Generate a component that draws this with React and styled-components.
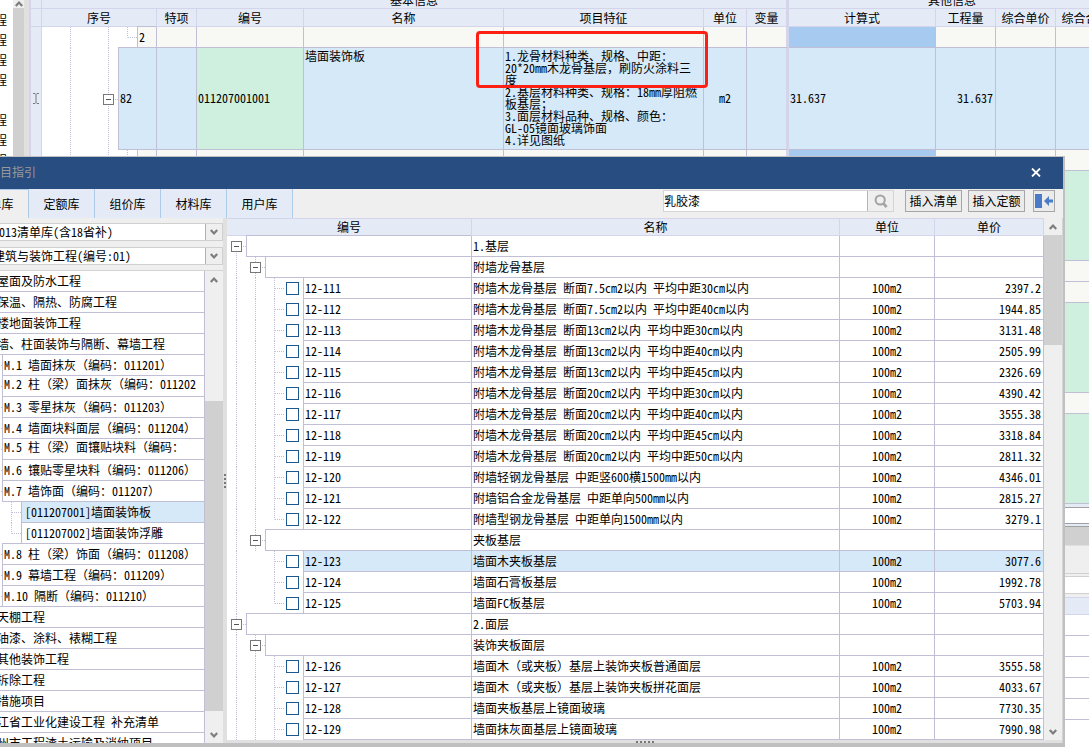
import React from 'react';
import styled, { createGlobalStyle, css } from 'styled-components';

const GlobalStyle = createGlobalStyle`
	* {
		box-sizing: border-box;
	}

	body {
		margin: 0;
		color: #000;
		font-family: "Noto Sans Mono CJK SC", "Noto Sans CJK SC", monospace;
		font-size: 12px;
		line-height: 14px;
	}

	button, input, select {
		margin: 0;
		padding: 0;
		color: inherit;
		font: inherit;
		border-radius: 0;
	}
`

const LINE = '#c0bfd6';
const HEAD_LINE = '#d4d5ea';
const HEAD = '#e4ebf7';
const SELECTED = '#d6e9f8';
const GREEN = '#cff0df';
const CREAM = '#f8f9f5';

const Screen = styled.main`
	position: relative;
	display: flex;
	height: 100vh;
	overflow: hidden;
	background: #fff;
`

/* tree guides */

const dotsDown = `repeating-linear-gradient(to bottom, ${LINE} 0 1px, transparent 1px 2px)`;
const dotsRight = `repeating-linear-gradient(to right, ${LINE} 0 1px, transparent 1px 2px)`;

const guides = {
	' ': 'none',
	'|': `${dotsDown} 9px 0 / 1px 100% no-repeat`,
	'T': `${dotsDown} 9px 0 / 1px 100% no-repeat, ${dotsRight} 10px 50% / 9px 1px no-repeat`,
	'L': `${dotsDown} 9px 0 / 1px 50% no-repeat, ${dotsRight} 10px 50% / 9px 1px no-repeat`,
	'F': `${dotsDown} 9px 100% / 1px 50% no-repeat, ${dotsRight} 10px 50% / 9px 1px no-repeat`,
};

const Guide = styled.span`
	display: flex;
	flex: 0 0 19px;
	align-items: center;
	justify-content: center;
	background: ${p => guides[p.$kind]};
`

const Expander = styled.button`
	display: flex;
	align-items: center;
	justify-content: center;
	width: 11px;
	height: 11px;
	border: 1px solid #777;
	background: #fff;

	&::before {
		content: "";
		width: 5px;
		height: 1px;
		background: #555;
	}
`

const TreeLine = styled.div`
	display: flex;
	height: ${p => p.$height || 21}px;
`

const NodeBox = styled.span`
	display: flex;
	flex: 1;
	min-width: 0;
	align-items: ${p => p.$wraps ? 'flex-start' : 'center'};
	padding-left: ${p => p.$inset || 1}px;
	padding-top: ${p => p.$wraps ? 1 : 0}px;
	padding-bottom: ${p => p.$tall ? 2 : 0}px;
	overflow: hidden;
	white-space: nowrap;
	border-left: 1px solid ${LINE};
	border-bottom: 1px solid ${LINE};
	box-shadow: 0 -1px 0 ${LINE};
	background: ${p => p.$bg || '#fff'};
`

const Guides = ({ kinds }) => kinds.split('').map((kind, i) => (
	kind === '-' || kind === '+'
		? (
			<Guide key={i} $kind={kind === '+' ? 'F' : 'T'}>
				<Expander type='button' aria-label='折叠' />
			</Guide>
		)
		: <Guide key={i} $kind={kind} />
));

/* scrollbars */

const Track = styled.div`
	display: flex;
	flex: 0 0 ${p => p.$width || 18}px;
	flex-direction: column;
	background: #efefef;
`

const Thumb = styled.div`
	flex: 0 0 ${p => p.$size}px;
	margin-top: ${p => p.$gap || 0}px;
	background: #d0d0d0;
`

const ArrowButton = styled.button`
	display: flex;
	flex: 0 0 auto;
	align-items: center;
	justify-content: center;
	height: ${p => p.$height || 17}px;
	margin-top: ${p => p.$last ? 'auto' : 0};
	border: 0;
	background: #efefef;
`

const Chevron = ({ up }) => (
	<svg width='10' height='8' viewBox='0 0 10 8' fill='none' stroke='#7d7d7d' strokeWidth='2.2'>
		<path d={up ? 'M1.8 6 5 2.6 8.2 6' : 'M1.8 2 5 5.4 8.2 2'} />
	</svg>
);

/* main window */

const SideList = styled.ul`
	flex: 0 0 13px;
	margin: 0;
	padding: 10px 0 0;
	overflow: hidden;
	list-style: none;
`

const SideItem = styled.li`
	display: flex;
	align-items: center;
	justify-content: flex-end;
	width: 7px;
	height: 20px;
`

const Divider = styled.div`
	flex: 0 0 7px;
	border-right: 2px solid ${HEAD_LINE};
	background: #e0e0e0;
`

const Workspace = styled.section`
	flex: 1;
	min-width: 0;
	overflow: hidden;
	background: #efefef;
`

const Grid = styled.table`
	width: ${p => p.$width || '100%'};
	table-layout: fixed;
	border-spacing: 0;
`

const HeadCell = styled.th`
	height: ${p => p.$group ? 9 : 18}px;
	padding: 0;
	overflow: hidden;
	font-weight: normal;
	white-space: nowrap;
	border-right: ${p => p.$thick ? 3 : 1}px solid ${HEAD_LINE};
	border-bottom: 1px solid ${HEAD_LINE};
	border-top: ${p => p.$topLine ? `1px solid ${HEAD_LINE}` : 0};
	background: ${HEAD};
`

const GroupLabel = styled.div`
	display: flex;
	align-items: flex-end;
	justify-content: center;
	height: 8px;
	padding-bottom: 1px;
	overflow: hidden;
`

const Cell = styled.td`
	height: ${p => p.$height || 21}px;
	padding: ${p => p.$top ? '1px 1px 0' : '0 1px'};
	overflow: hidden;
	text-align: ${p => p.$align || 'left'};
	vertical-align: ${p => p.$top ? 'top' : 'middle'};
	white-space: pre;
	border-right: ${p => p.$thick ? `3px solid ${HEAD_LINE}` : `1px solid ${LINE}`};
	border-bottom: 1px solid ${LINE};
	background: ${p => p.$bg || '#fff'};
	${p => p.$height > 21 && css`
		padding-bottom: 2px;
	`}
	${p => p.$dense && css`
		line-height: 12px;
	`}
	${p => p.$align === 'right' && css`
		padding-right: 2px;
	`}
`

const TreeCell = styled.td`
	height: ${p => p.$height || 21}px;
	padding: 0;
	border-right: 1px solid ${LINE};
	background: #fff;
`

const GutterCell = styled.td`
	padding: 0;
	text-align: center;
	border-right: 1px solid ${HEAD_LINE};
	background: ${HEAD};
`

const Band = styled.div`
	height: ${p => p.$height}px;
	border-bottom: 1px solid ${p => p.$line};
	background: ${p => p.$bg};
`

const Callout = styled.div`
	position: absolute;
	top: 31px;
	left: 476px;
	width: 232px;
	height: 57px;
	border: 3px solid #fc2015;
	border-radius: 4px;
	pointer-events: none;
`

/* dialog */

const Dialog = styled.section`
	position: absolute;
	top: 156px;
	left: -37px;
	right: 24px;
	border-top: 1px solid #c0c0c0;
	border-right: 2px solid #c0c0c0;
	border-bottom: 4px solid #c0c0c0;
	background: #efefef;
`

const TitleBar = styled.header`
	display: flex;
	align-items: center;
	justify-content: space-between;
	height: 32px;
	padding: 0 20px 2px 25px;
	color: #999;
	font-family: "Noto Sans CJK SC", sans-serif;
	background: #284d81;
`

const CloseButton = styled.button`
	display: flex;
	padding: 2px;
	border: 0;
	background: none;
`

const Toolbar = styled.div`
	display: flex;
	height: 29px;
`

const Tab = styled.button`
	width: 66px;
	height: 29px;
	font-family: "Noto Sans CJK SC", sans-serif;
	border: 0;
	border-right: 1px solid #aecbe8;
	border-top: ${p => p.$active ? '1px solid #aecbe8' : 0};
	background: ${p => p.$active ? '#efefef' : HEAD};
`

const Tools = styled.div`
	display: flex;
	flex: 1;
	justify-content: flex-end;
	padding: 1px 8px 6px 0;
`

const SearchBox = styled.form`
	display: flex;
	width: 231px;
	margin-right: 11px;
	border: 1px solid #d4d4d4;
	background: #efefef;
`

const SearchInput = styled.input`
	flex: 1;
	min-width: 0;
	border: 0;
	border-right: 1px solid #b5b5b5;
	outline: 0;
	background: #fff;
`

const SearchButton = styled.button`
	display: flex;
	align-items: center;
	justify-content: center;
	width: 25px;
	border: 0;
	background: #efefef;
`

const ToolButton = styled.button`
	display: flex;
	align-items: center;
	justify-content: center;
	width: ${p => p.$icon ? 22 : 57}px;
	margin-right: ${p => p.$icon ? 0 : p.$wide ? 8 : 6}px;
	white-space: nowrap;
	border: 1px solid #a6a6a6;
	background: #ebebeb;
`

const Body = styled.div`
	display: flex;
	border-right: 1px solid #d4d4d4;
`

const LibraryPane = styled.aside`
	display: flex;
	flex: 0 0 260px;
	flex-direction: column;
	gap: 5px;
	padding-top: 5px;
`

const Pickers = styled.div`
	display: grid;
	gap: 6px;
`

const Picker = styled.label`
	display: flex;
	height: 18px;
	border: 1px solid #d0d0d0;
	border-left: 0;
	background: #fff;
`

const PickerSelect = styled.select`
	flex: 1;
	min-width: 0;
	padding-left: 30px;
	border: 0;
	appearance: none;
	background: #fff;
`

const PickerArrow = styled.span`
	display: flex;
	flex: 0 0 17px;
	align-items: center;
	justify-content: center;
	border-left: 1px solid #b0b0b0;
	background: #efefef;
`

const CatalogFrame = styled.div`
	display: flex;
	flex: 1 1 0px;
	min-height: 0;
	overflow: hidden;
	border-top: 1px solid #d4d4d4;
`

const Catalog = styled.ul`
	flex: 1;
	min-width: 0;
	margin: 0;
	padding: 0 0 0 1px;
	overflow: hidden;
	list-style: none;
	border-right: 1px solid ${LINE};
	background: #fff;
`

const Splitter = styled.div`
	display: flex;
	flex: 0 0 4px;
	flex-direction: column;
	align-items: center;
	justify-content: center;
	gap: 2px;
	background: #e0e0e0;
`

const BottomSplitter = styled(Splitter)`
	flex-direction: row;
	height: 3px;
`

const Dot = styled.span`
	width: 2px;
	height: 2px;
	background: #777;
`

const QuotaPane = styled.div`
	flex: 1;
	min-width: 0;
`

const QuotaFrame = styled.div`
	display: flex;
`

const QuotaTable = styled.div`
	flex: 1;
	min-width: 0;
	overflow: hidden;
	background: #fff;
`

const CheckSlot = styled.span`
	display: flex;
	flex: 0 0 19px;
	align-items: center;
	padding-left: 2px;
`

const Check = styled.input`
	width: 13px;
	height: 13px;
	appearance: none;
	border: 1px solid #1b5890;
	background: #fff;
`

const columns = [
	['序号', 115], ['特项', 40], ['编号', 107], ['名称', 200], ['项目特征', 200], ['单位', 43],
	['变量', 42], ['计算式', 147], ['工程量', 60], ['综合单价', 60], ['综合合价', 60],
];

const feature = [
	'1.龙骨材料种类、规格、中距：',
	'20*20mm木龙骨基层，刷防火涂料三',
	'度',
	'2.基层材料种类、规格：18mm厚阻燃',
	'板基层；',
	'3.面层材料品种、规格、颜色：',
	'GL-05镜面玻璃饰面',
	'4.详见图纸',
].join('\n');

const moreRows = [[21], [90, GREEN], [21], [21], [90, GREEN], [21], [90, GREEN]];

const catalog = [
	[' ', 'J 屋面及防水工程'],
	[' ', 'K 保温、隔热、防腐工程'],
	[' ', 'L 楼地面装饰工程'],
	[' ', 'M 墙、柱面装饰与隔断、幕墙工程'],
	[' T', 'M.1 墙面抹灰（编码：011201）'],
	[' T', 'M.2 柱（梁）面抹灰（编码：011202', { wraps: true }],
	[' T', 'M.3 零星抹灰（编码：011203）'],
	[' T', 'M.4 墙面块料面层（编码：011204）'],
	[' T', 'M.5 柱（梁）面镶贴块料（编码：', { wraps: true }],
	[' T', 'M.6 镶贴零星块料（编码：011206）'],
	[' T', 'M.7 墙饰面（编码：011207）'],
	[' |T', '[011207001]墙面装饰板', { selected: true }],
	[' |L', '[011207002]墙面装饰浮雕'],
	[' T', 'M.8 柱（梁）饰面（编码：011208）'],
	[' T', 'M.9 幕墙工程（编码：011209）'],
	[' L', 'M.10 隔断（编码：011210）'],
	[' ', 'N 天棚工程'],
	[' ', 'P 油漆、涂料、裱糊工程'],
	[' ', 'Q 其他装饰工程'],
	[' ', 'R 拆除工程'],
	[' ', 'S 措施项目'],
	[' ', '浙江省工业化建设工程 补充清单'],
	[' ', '杭州市工程渣土运输及消纳项目'],
];

const quotas = [
	['+', '', '1.基层'],
	['|-', '', '附墙龙骨基层'],
	['||T', '12-111', '附墙木龙骨基层 断面7.5cm2以内 平均中距30cm以内', '2397.2'],
	['||T', '12-112', '附墙木龙骨基层 断面7.5cm2以内 平均中距40cm以内', '1944.85'],
	['||T', '12-113', '附墙木龙骨基层 断面13cm2以内 平均中距30cm以内', '3131.48'],
	['||T', '12-114', '附墙木龙骨基层 断面13cm2以内 平均中距40cm以内', '2505.99'],
	['||T', '12-115', '附墙木龙骨基层 断面13cm2以内 平均中距45cm以内', '2326.69'],
	['||T', '12-116', '附墙木龙骨基层 断面20cm2以内 平均中距30cm以内', '4390.42'],
	['||T', '12-117', '附墙木龙骨基层 断面20cm2以内 平均中距40cm以内', '3555.38'],
	['||T', '12-118', '附墙木龙骨基层 断面20cm2以内 平均中距45cm以内', '3318.84'],
	['||T', '12-119', '附墙木龙骨基层 断面20cm2以内 平均中距50cm以内', '2811.32'],
	['||T', '12-120', '附墙轻钢龙骨基层 中距竖600横1500mm以内', '4346.01'],
	['||T', '12-121', '附墙铝合金龙骨基层 中距单向500mm以内', '2815.27'],
	['||L', '12-122', '附墙型钢龙骨基层 中距单向1500mm以内', '3279.1'],
	['|-', '', '夹板基层'],
	['| T', '12-123', '墙面木夹板基层', '3077.6', true],
	['| T', '12-124', '墙面石膏板基层', '1992.78'],
	['| L', '12-125', '墙面FC板基层', '5703.94'],
	['-', '', '2.面层'],
	['|-', '', '装饰夹板面层'],
	['||T', '12-126', '墙面木（或夹板）基层上装饰夹板普通面层', '3555.58'],
	['||T', '12-127', '墙面木（或夹板）基层上装饰夹板拼花面层', '4033.67'],
	['||T', '12-128', '墙面夹板基层上镜面玻璃', '7730.35'],
	['||T', '12-129', '墙面抹灰面基层上镜面玻璃', '7990.98'],
];

const BillTable = () => (
	<Grid $width='1085px'>
		<colgroup>
			<col style={{ width: 11 }} />
			{columns.map(([name, width]) => <col key={name} style={{ width }} />)}
		</colgroup>
		<thead>
			<tr>
				<HeadCell $group />
				<HeadCell colSpan={7} $thick $group><GroupLabel>基本信息</GroupLabel></HeadCell>
				<HeadCell colSpan={4} $group><GroupLabel>其他信息</GroupLabel></HeadCell>
			</tr>
			<tr>
				<HeadCell />
				{columns.map(([name]) => <HeadCell key={name} $thick={name === '变量'}>{name}</HeadCell>)}
			</tr>
		</thead>
		<tbody>
			<tr>
				<GutterCell />
				<TreeCell>
					<TreeLine><Guides kinds=' | |L' /><NodeBox $bg={CREAM}>2</NodeBox></TreeLine>
				</TreeCell>
				{columns.slice(1).map(([name]) => (
					<Cell key={name} $thick={name === '变量'} $bg={name === '计算式' ? '#a6caf0' : CREAM} />
				))}
			</tr>
			<tr>
				<GutterCell>
					<svg width='8' height='11' viewBox='0 0 8 11' fill='none' stroke='#777'>
						<path d='M1 .5h2l1 1 1-1h2M4 1.5v8M1 10.5h2l1-1 1 1h2' />
					</svg>
				</GutterCell>
				<TreeCell $height={102}>
					<TreeLine $height={102}>
						<Guides kinds=' | -' />
						<NodeBox $tall $bg={SELECTED}>82</NodeBox>
					</TreeLine>
				</TreeCell>
				<Cell $height={102} $bg={SELECTED} />
				<Cell $height={102} $bg={GREEN}>011207001001</Cell>
				<Cell $height={102} $bg={SELECTED} $top>墙面装饰板</Cell>
				<Cell $height={102} $bg={SELECTED} $dense>{feature}</Cell>
				<Cell $height={102} $bg={SELECTED} $align='center'>m2</Cell>
				<Cell $height={102} $bg={SELECTED} $thick />
				<Cell $height={102} $bg={SELECTED}>31.637</Cell>
				<Cell $height={102} $bg={SELECTED} $align='right'>31.637</Cell>
				<Cell $height={102} $bg={SELECTED} />
				<Cell $height={102} $bg={SELECTED} />
			</tr>
			{moreRows.map(([height, total], i) => (
				<tr key={i}>
					<GutterCell />
					<TreeCell $height={height}>
						<TreeLine $height={height}><Guides kinds=' | ||' /><NodeBox $bg={CREAM} /></TreeLine>
					</TreeCell>
					{columns.slice(1).map(([name]) => (
						<Cell
							key={name}
							$height={height}
							$thick={name === '变量'}
							$bg={name === '计算式' ? '#a6caf0' : name === '综合合价' && total || CREAM}
						/>
					))}
				</tr>
			))}
		</tbody>
	</Grid>
);

const LowerPanel = () => (
	<div>
		<Band $height={4} $bg={HEAD} $line='#a0a0a0' />
		<Band $height={16} $bg='#fff' $line='#a0a0a0' />
		<Band $height={3} $bg={HEAD} $line='#a0a0a0' />
		<Band $height={19} $bg='#d0d0d0' $line='#e0e0e0' />
		<Band $height={28} $bg='#efefef' $line='#d0d0d0' />
		<Band $height={3} $bg='#efefef' $line='#d0d0d0' />
		<Band $height={17} $bg='#fff' $line='#d0d0d0' />
		<Band $height={4} $bg='#efefef' $line={HEAD_LINE} />
		<Band $height={17} $bg={HEAD} $line={HEAD_LINE} />
		{[0, 1, 2, 3, 4].map(i => <Band key={i} $height={21} $bg='#fff' $line={LINE} />)}
		<Band $height={60} $bg='#fff' $line='#fff' />
	</div>
);

const Pick = ({ label, value }) => (
	<Picker>
		<PickerSelect aria-label={label} defaultValue={value}>
			<option>{value}</option>
		</PickerSelect>
		<PickerArrow><Chevron /></PickerArrow>
	</Picker>
);

const QuotaRow = ({ row }) => {
	const [kinds, code, name, price, selected] = row;
	const bg = selected ? SELECTED : '#fff';

	return (
		<tr>
			<TreeCell>
				<TreeLine>
					<Guides kinds={kinds} />
					{code && <CheckSlot><Check type='checkbox' aria-label={code} /></CheckSlot>}
					<NodeBox $bg={bg}>{code}</NodeBox>
				</TreeLine>
			</TreeCell>
			<Cell $bg={bg}>{name}</Cell>
			<Cell $bg={bg} $align='center'>{price && '100m2'}</Cell>
			<Cell $bg={bg} $align='right'>{price}</Cell>
		</tr>
	);
}

class GuideDialog extends React.Component {
	constructor(props) {
		super(props);
		this.state = {
			tab: '清单库',
			keyword: '乳胶漆'
		}
	}

	handleKeyword = (e) => {
		this.setState({ keyword: e.target.value });
	}

	render() {
		const { tab, keyword } = this.state;

		return (
			<Dialog role='dialog' aria-label='项目指引'>
				<TitleBar>
					<span>项目指引</span>
					<CloseButton type='button' aria-label='关闭'>
						<svg width='10' height='9' viewBox='0 0 10 9' stroke='#fff' strokeWidth='1.8'>
							<path d='M1 .5 9 8.5M9 .5 1 8.5' />
						</svg>
					</CloseButton>
				</TitleBar>
				<Toolbar>
					{['清单库', '定额库', '组价库', '材料库', '用户库'].map(name => (
						<Tab key={name} type='button' $active={name === tab} onClick={() => this.setState({ tab: name })}>
							{name}
						</Tab>
					))}
					<Tools>
						<SearchBox onSubmit={e => e.preventDefault()}>
							<SearchInput aria-label='搜索' value={keyword} onChange={this.handleKeyword} />
							<SearchButton aria-label='搜索'>
								<svg width='14' height='14' viewBox='0 0 14 14' fill='none' stroke='#a3a3a3' strokeWidth='2'>
									<circle cx='6.2' cy='6' r='4.6' />
									<path d='M9 9.2 12.6 13' strokeWidth='2.6' />
								</svg>
							</SearchButton>
						</SearchBox>
						<ToolButton type='button'>插入清单</ToolButton>
						<ToolButton type='button' $wide>插入定额</ToolButton>
						<ToolButton type='button' $icon aria-label='收起'>
							<svg width='18' height='14' viewBox='0 0 18 14' fill='#4a7bc8'>
								<path d='M0 0h7v14H0zM9 7l5-5v3.5h4v3h-4V12z' />
							</svg>
						</ToolButton>
					</Tools>
				</Toolbar>
				<Body>
					<LibraryPane>
						<Pickers>
							<Pick label='清单库' value='2013清单库(含18省补)' />
							<Pick label='专业' value='建筑与装饰工程(编号:01)' />
						</Pickers>
						<CatalogFrame>
							<Catalog>
								{catalog.map(([kinds, text, opts = {}]) => (
									<li key={text}>
										<TreeLine>
											<Guides kinds={kinds} />
											<NodeBox
												$wraps={opts.wraps}
												$inset={kinds.length > 2 ? 3 : 1}
												$bg={opts.selected && SELECTED}
											>
												{text}
											</NodeBox>
										</TreeLine>
									</li>
								))}
							</Catalog>
							<Track>
								<ArrowButton type='button' aria-label='上移'><Chevron up /></ArrowButton>
								<Thumb $gap={113} $size={310} />
								<ArrowButton type='button' aria-label='下移' $last><Chevron /></ArrowButton>
							</Track>
						</CatalogFrame>
					</LibraryPane>
					<Splitter><Dot /><Dot /><Dot /><Dot /></Splitter>
					<QuotaPane>
						<QuotaFrame>
							<QuotaTable>
								<Grid>
									<colgroup>
										<col style={{ width: 245 }} />
										<col />
										<col style={{ width: 95 }} />
										<col style={{ width: 109 }} />
									</colgroup>
									<thead>
										<tr>
											<HeadCell $topLine>编号</HeadCell>
											<HeadCell $topLine>名称</HeadCell>
											<HeadCell $topLine>单位</HeadCell>
											<HeadCell $topLine>单价</HeadCell>
										</tr>
									</thead>
									<tbody>
										{quotas.map(row => <QuotaRow key={row[1] + row[2]} row={row} />)}
									</tbody>
								</Grid>
							</QuotaTable>
							<Track>
								<ArrowButton type='button' aria-label='上移'><Chevron up /></ArrowButton>
								<Thumb $size={110} />
								<ArrowButton type='button' aria-label='下移' $last><Chevron /></ArrowButton>
							</Track>
						</QuotaFrame>
						<BottomSplitter><Dot /><Dot /><Dot /><Dot /><Dot /></BottomSplitter>
					</QuotaPane>
				</Body>
			</Dialog>
		);
	}
}

const App = () => (
	<Screen>
		<GlobalStyle />
		<SideList>
			{['程', '程', '程', '程', '', '程', '程', '程'].map((text, i) => <SideItem key={i}>{text}</SideItem>)}
		</SideList>
		<Track $width={11}>
			<ArrowButton type='button' aria-label='上移' $height={8}><Chevron up /></ArrowButton>
			<Thumb $size={400} />
		</Track>
		<Divider />
		<Workspace>
			<BillTable />
			<LowerPanel />
		</Workspace>
		<Callout />
		<GuideDialog />
	</Screen>
);

export default App;
